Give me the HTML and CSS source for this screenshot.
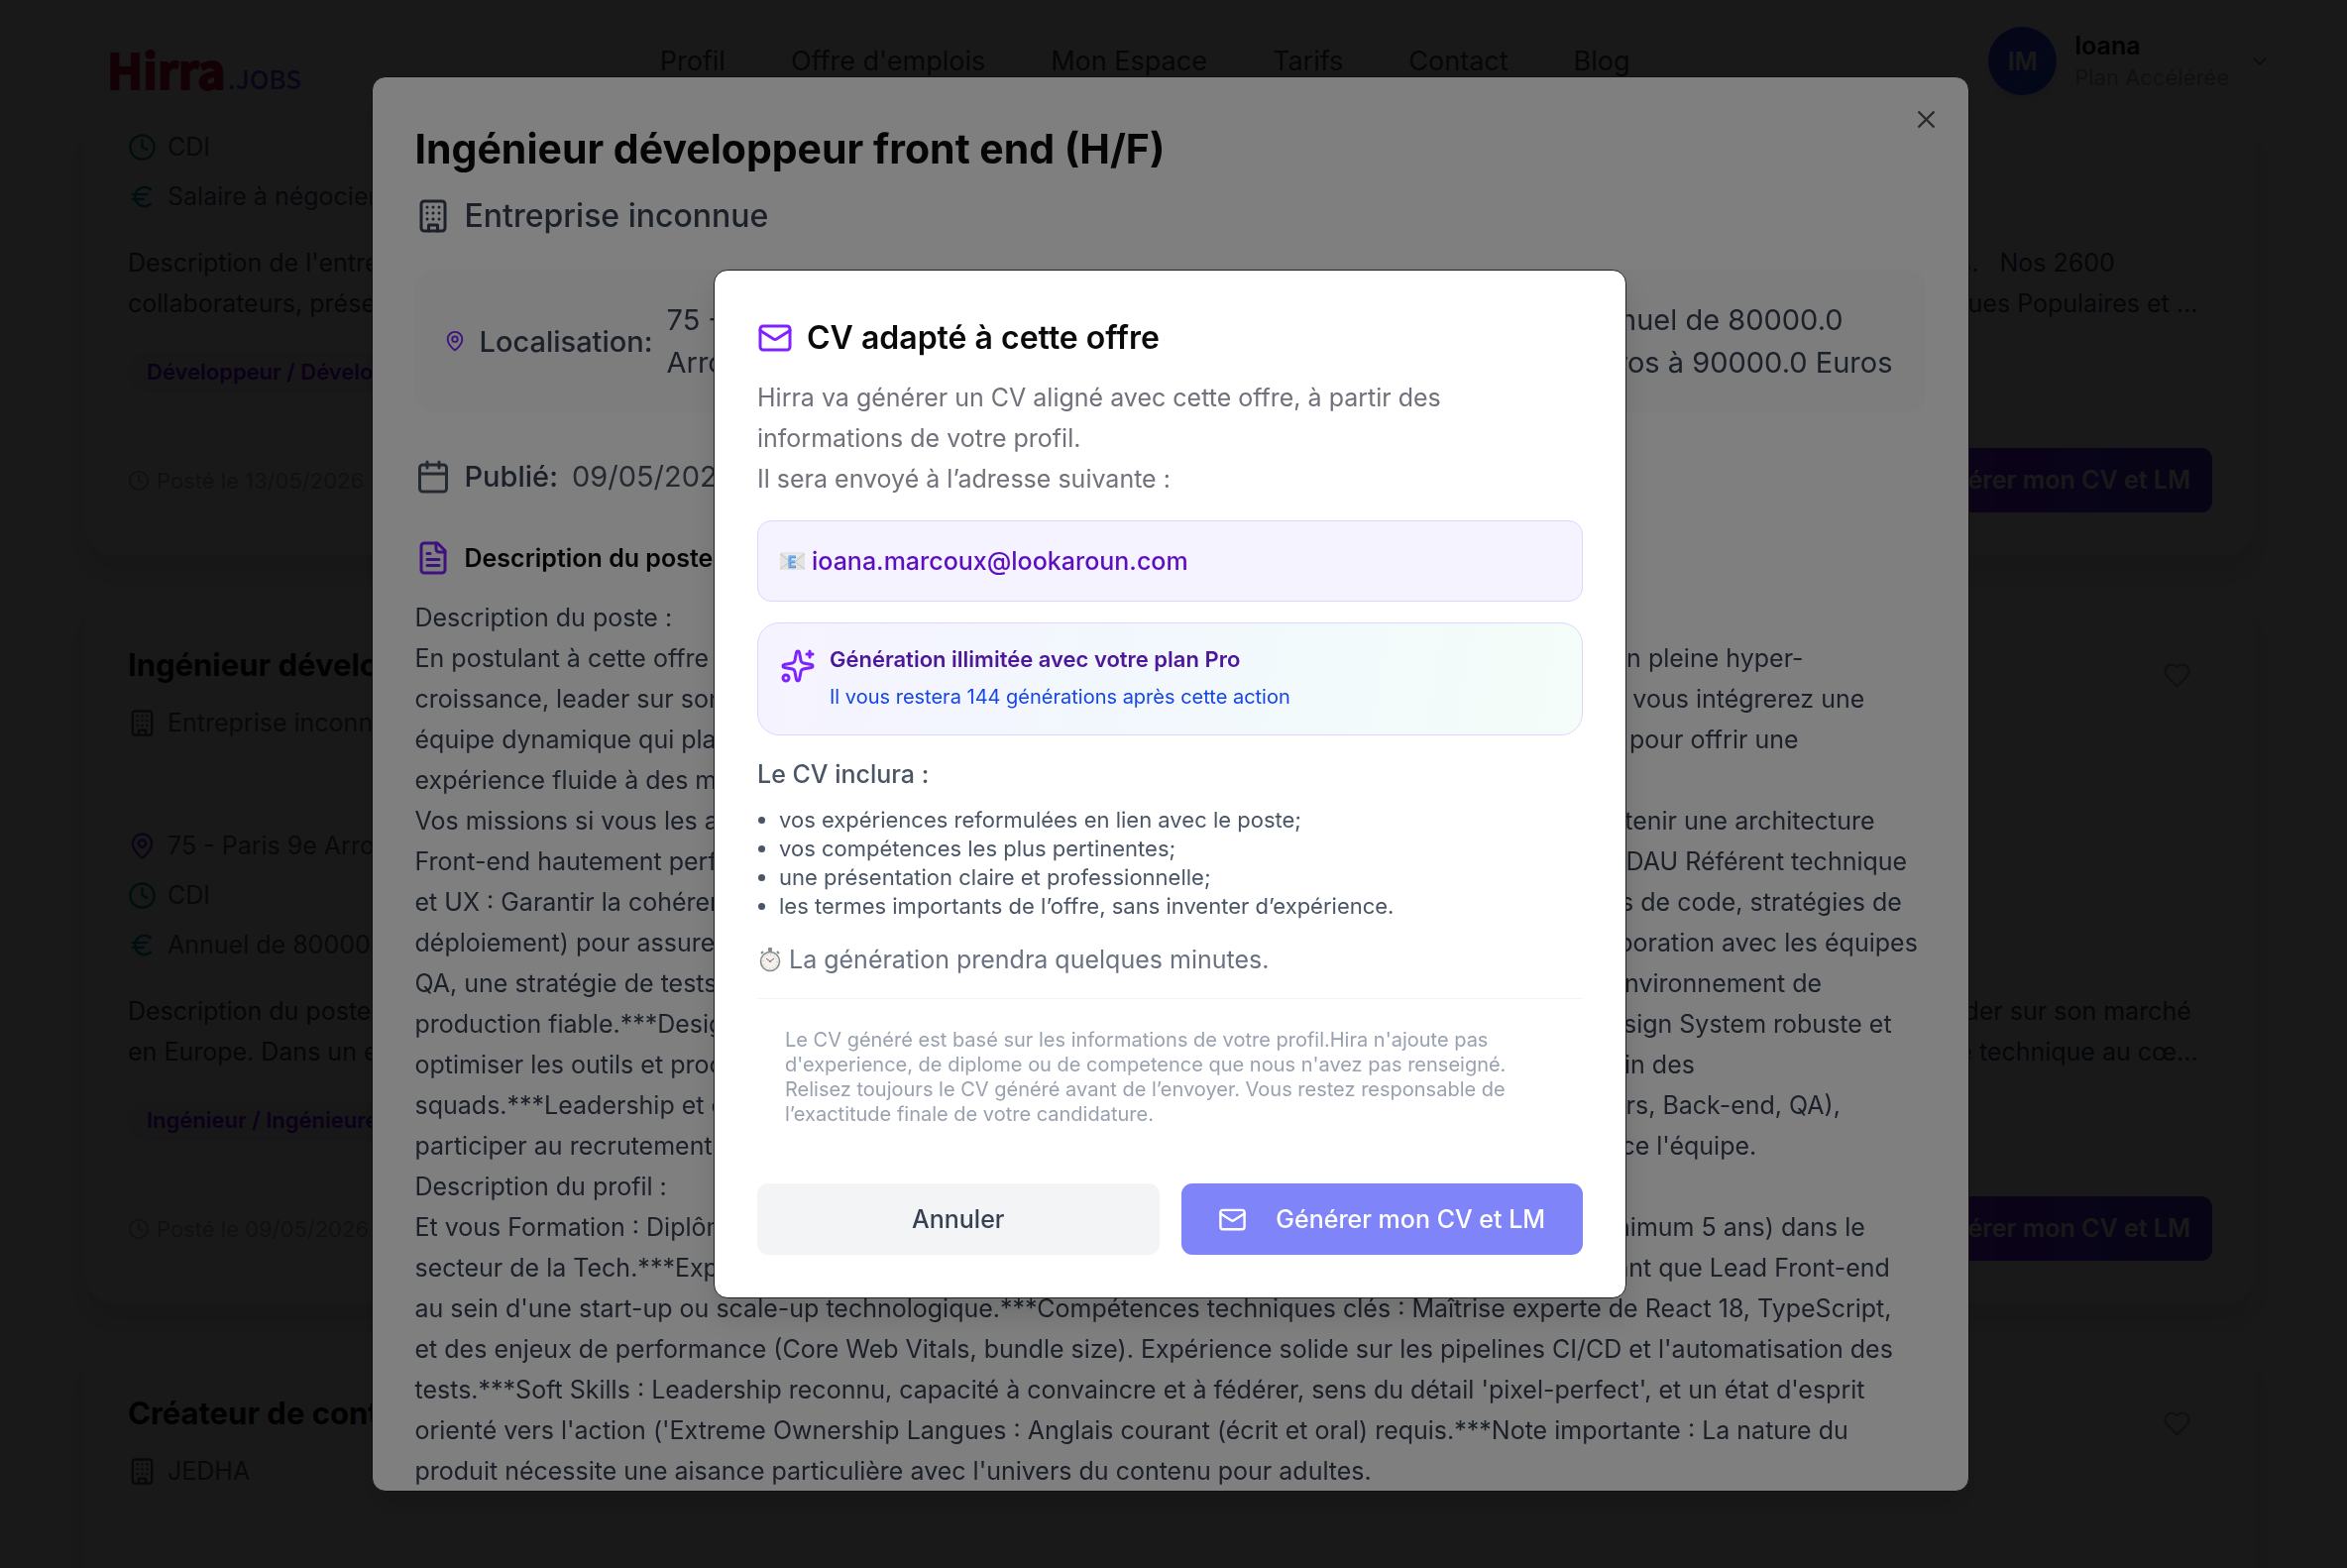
FILE: index.html
```html
<!DOCTYPE html>
<html lang="fr">
<head>
<meta charset="utf-8">
<meta name="viewport" content="width=device-width, initial-scale=1">
<title>Hirra.JOBS – Offres d'emploi</title>
<link rel="stylesheet" href="styles.css">
</head>
<body>

<svg class="sprite" aria-hidden="true">
  <symbol id="i-clock" viewBox="0 0 24 24"><circle cx="12" cy="12" r="10"/><path d="M12 6v6l4 2"/></symbol>
  <symbol id="i-euro" viewBox="0 0 24 24"><path d="M4 10h12"/><path d="M4 14h9"/><path d="M19 6a7.7 7.7 0 0 0-5.2-2A7.9 7.9 0 0 0 6 12c0 4.4 3.5 8 7.8 8 2 0 3.8-.8 5.2-2"/></symbol>
  <symbol id="i-building" viewBox="0 0 24 24"><rect x="4" y="2" width="16" height="20" rx="2"/><path d="M9 22v-4h6v4"/><path d="M8 6h.01M16 6h.01M12 6h.01M12 10h.01M12 14h.01M16 10h.01M16 14h.01M8 10h.01M8 14h.01"/></symbol>
  <symbol id="i-pin" viewBox="0 0 24 24"><path d="M20 10c0 4.993-5.539 10.193-7.399 11.799a1 1 0 0 1-1.202 0C9.539 20.193 4 14.993 4 10a8 8 0 0 1 16 0"/><circle cx="12" cy="10" r="3"/></symbol>
  <symbol id="i-calendar" viewBox="0 0 24 24"><path d="M8 2v4M16 2v4"/><rect x="3" y="4" width="18" height="18" rx="2"/><path d="M3 10h18"/></symbol>
  <symbol id="i-file" viewBox="0 0 24 24"><path d="M15 2H6a2 2 0 0 0-2 2v16a2 2 0 0 0 2 2h12a2 2 0 0 0 2-2V7Z"/><path d="M14 2v4a2 2 0 0 0 2 2h4"/><path d="M10 9H8M16 13H8M16 17H8"/></symbol>
  <symbol id="i-mail" viewBox="0 0 24 24"><rect x="2" y="4" width="20" height="16" rx="2"/><path d="m22 7-8.97 5.7a1.94 1.94 0 0 1-2.06 0L2 7"/></symbol>
  <symbol id="i-heart" viewBox="0 0 24 24"><path d="M19 14c1.49-1.46 3-3.21 3-5.5A5.5 5.5 0 0 0 16.5 3c-1.76 0-3 .5-4.5 2-1.5-1.5-2.74-2-4.5-2A5.5 5.5 0 0 0 2 8.5c0 2.3 1.5 4.05 3 5.5l7 7Z"/></symbol>
  <symbol id="i-x" viewBox="0 0 24 24"><path d="M18 6 6 18M6 6l12 12"/></symbol>
  <symbol id="i-chevron" viewBox="0 0 24 24"><path d="m6 9 6 6 6-6"/></symbol>
  <symbol id="i-sparkles" viewBox="0 0 24 24"><path d="M11.017 2.814a1 1 0 0 1 1.966 0l1.051 5.558a2 2 0 0 0 1.594 1.594l5.558 1.051a1 1 0 0 1 0 1.966l-5.558 1.051a2 2 0 0 0-1.594 1.594l-1.051 5.558a1 1 0 0 1-1.966 0l-1.051-5.558a2 2 0 0 0-1.594-1.594l-5.558-1.051a1 1 0 0 1 0-1.966l5.558-1.051a2 2 0 0 0 1.594-1.594z"/><path d="M20 2v4M22 4h-4"/><circle cx="4" cy="20" r="2"/></symbol>
</svg>

<header class="header">
  <a class="logo" href="#"><span class="logo-name">Hirra</span><span class="logo-suffix">.JOBS</span></a>
  <nav class="nav">
    <a href="#">Profil</a>
    <a href="#">Offre d'emplois</a>
    <a href="#">Mon Espace</a>
    <a href="#">Tarifs</a>
    <a href="#">Contact</a>
    <a href="#">Blog</a>
  </nav>
  <button class="account" type="button">
    <span class="avatar">IM</span>
    <span class="account-text"><span class="account-name">Ioana</span><span class="account-plan">Plan Accélérée</span></span>
    <svg class="icon icon-sm account-chevron"><use href="#i-chevron"/></svg>
  </button>
</header>

<main class="offers">
  <article class="card card-scrolled">
    <ul class="facts">
      <li><svg class="icon icon-md green"><use href="#i-clock"/></svg>CDI</li>
      <li><svg class="icon icon-md cyan"><use href="#i-euro"/></svg>Salaire à négocier</li>
    </ul>
    <p class="summary">Description de l'entreprise : Notre groupe coopératif accompagne depuis plus de vingt ans les banques et leurs clients dans leurs projets très technologiques.&nbsp; &nbsp;Nos 2600<br>collaborateurs, présents sur plusieurs sites en France, conçoivent et développent le système d'information et des services bancaires de l'ensemble des Banques Populaires et ...</p>
    <span class="tag">Développeur / Développeuse front-end</span>
    <footer class="card-foot">
      <span class="posted"><svg class="icon icon-sm"><use href="#i-clock"/></svg>Posté le 13/05/2026</span>
      <button class="btn-offer" type="button">Générer mon CV et LM</button>
    </footer>
  </article>

  <article class="card">
    <header class="card-head">
      <div class="card-title">
        <h2>Ingénieur développeur front end (H/F)</h2>
        <p class="company"><svg class="icon icon-md"><use href="#i-building"/></svg>Entreprise inconnue</p>
      </div>
      <button class="btn-like" type="button" aria-label="Ajouter aux favoris"><svg class="icon icon-md"><use href="#i-heart"/></svg></button>
    </header>
    <ul class="facts">
      <li><svg class="icon icon-md violet"><use href="#i-pin"/></svg>75 - Paris 9e Arrondissement</li>
      <li><svg class="icon icon-md green"><use href="#i-clock"/></svg>CDI</li>
      <li><svg class="icon icon-md cyan"><use href="#i-euro"/></svg>Annuel de 80000.0 Euros à 90000.0 Euros</li>
    </ul>
    <p class="summary">Description du poste : En postulant à cette offre, vous rejoignez notre équipe passionnée et un acteur technologique français en pleine hyper-croissance, leader sur son marché<br>en Europe. Dans un environnement stimulant et très collaboratif, vous intégrerez une équipe très dynamique qui place la performance et la très grande qualité technique au cœ...</p>
    <span class="tag">Ingénieur / Ingénieure développement</span>
    <footer class="card-foot">
      <span class="posted"><svg class="icon icon-sm"><use href="#i-clock"/></svg>Posté le 09/05/2026</span>
      <button class="btn-offer" type="button">Générer mon CV et LM</button>
    </footer>
  </article>

  <article class="card">
    <header class="card-head">
      <div class="card-title">
        <h2>Créateur de contenu (H/F)</h2>
        <p class="company"><svg class="icon icon-md"><use href="#i-building"/></svg>JEDHA</p>
      </div>
      <button class="btn-like" type="button" aria-label="Ajouter aux favoris"><svg class="icon icon-md"><use href="#i-heart"/></svg></button>
    </header>
  </article>
</main>

<div class="overlay overlay-offer">
  <section class="dialog dialog-offer" role="dialog" aria-labelledby="offer-title">
    <button class="btn-close" type="button" aria-label="Fermer"><svg class="icon icon-md"><use href="#i-x"/></svg></button>
    <h1 id="offer-title">Ingénieur développeur front end (H/F)</h1>
    <p class="offer-company"><svg class="icon icon-lg"><use href="#i-building"/></svg>Entreprise inconnue</p>
    <dl class="offer-facts">
      <div><svg class="icon icon-sm violet"><use href="#i-pin"/></svg><dt>Localisation:</dt><dd>75 - Paris 9e Arrondissement</dd></div>
      <div><svg class="icon icon-sm green"><use href="#i-clock"/></svg><dt>Contrat:</dt><dd>CDI</dd></div>
      <div><svg class="icon icon-sm cyan"><use href="#i-euro"/></svg><dt>Salaire:</dt><dd>Annuel de 80000.0 Euros à 90000.0 Euros</dd></div>
    </dl>
    <p class="offer-date"><svg class="icon icon-lg"><use href="#i-calendar"/></svg><strong>Publié:</strong><time datetime="2026-05-09">09/05/2026</time></p>
    <h2 class="offer-heading"><svg class="icon icon-lg violet"><use href="#i-file"/></svg>Description du poste</h2>
    <p class="offer-text">Description du poste :<br>
En postulant à cette offre vous rejoignez notre équipe passionnée et un acteur technologique français en pleine hyper-<br>
croissance, leader sur son marché en Europe. Dans un environnement très stimulant et très collaboratif, vous intégrerez une<br>
équipe dynamique qui place la performance technique et l'expérience client au cœur de notre stratégie pour offrir une<br>
expérience fluide à des millions d'utilisateurs.<br>
Vos missions si vous les acceptez : ***Architecture : Concevoir, faire évoluer, documenter et aussi maintenir une architecture<br>
Front-end hautement performante et aussi sécurisée, capable de supporter des dizaines de millions de DAU Référent technique<br>
et UX : Garantir la cohérence technique, graphique et visuelle de l'ensemble de nos applications (revues de code, stratégies de<br>
déploiement) pour assurer la qualité et aussi la maintenabilité du code livré. ***Qualité : Définir en collaboration avec les équipes<br>
QA, une stratégie de tests automatisés unitaires, d'intégration puis de bout en bout afin de garantir un environnement de<br>
production fiable.***Design System : Construire, documenter et faire évoluer avec des designers un Design System robuste et<br>
optimiser les outils et processus de développements pour fluidifier une collaboration au quotidien au sein des<br>
squads.***Leadership et coordination : Collaborer au quotidien avec toutes les autres équipes (Designers, Back-end, QA),<br>
participer au recrutement et accompagner la montée en compétences technique et humaine, qui renforce l'équipe.<br>
Description du profil :<br>
Et vous Formation : Diplôme d'ingénieur ou équivalent, avec longue expérience solide et confirmée (minimum 5 ans) dans le<br>
secteur de la Tech.***Expérience : Vous avez déjà souvent occupé avec succès un poste similaire en tant que Lead Front-end<br>
au sein d'une start-up ou scale-up technologique.***Compétences techniques clés : Maîtrise experte de React 18, TypeScript,<br>
et des enjeux de performance (Core Web Vitals, bundle size). Expérience solide sur les pipelines CI/CD et l'automatisation des<br>
tests.***Soft Skills : Leadership reconnu, capacité à convaincre et à fédérer, sens du détail 'pixel-perfect', et un état d'esprit<br>
orienté vers l'action ('Extreme Ownership Langues : Anglais courant (écrit et oral) requis.***Note importante : La nature du<br>
produit nécessite une aisance particulière avec l'univers du contenu pour adultes.</p>
  </section>
</div>

<div class="overlay overlay-cv">
  <section class="dialog dialog-cv" role="dialog" aria-modal="true" aria-labelledby="cv-title">
    <h2 class="cv-title" id="cv-title"><svg class="icon icon-lg violet"><use href="#i-mail"/></svg>CV adapté à cette offre</h2>
    <p class="cv-intro">Hirra va générer un CV aligné avec cette offre, à partir des informations de votre profil.<br>Il sera envoyé à l’adresse suivante :</p>
    <p class="cv-email">
      <svg class="emoji" viewBox="0 0 25 25" aria-hidden="true"><rect x="0" y="4" width="25" height="17" rx="1" fill="#e3e3e3"/><path d="M0 5l10 8L0 20M25 5l-10 8 10 7" fill="none" stroke="#c3c3c3"/><path d="M1 4l11.500 9L24 4z" fill="#ececec" stroke="#cfcfcf" stroke-width=".6"/><path d="M16 8h-6v10h6M10 13h5" fill="none" stroke="#4f83bd" stroke-width="2.600"/><path d="M15.500 7.500h-6v10h6M10 12.500h5" fill="none" stroke="#6fb1f5" stroke-width="1.800"/></svg>
      <span>ioana.marcoux@lookaroun.com</span>
    </p>
    <div class="cv-plan">
      <svg class="icon icon-lg violet"><use href="#i-sparkles"/></svg>
      <div><p class="cv-plan-title">Génération illimitée avec votre plan Pro</p><p class="cv-plan-left">Il vous restera 144 générations après cette action</p></div>
    </div>
    <p class="cv-includes">Le CV inclura :</p>
    <ul class="cv-list">
      <li>vos expériences reformulées en lien avec le poste;</li>
      <li>vos compétences les plus pertinentes;</li>
      <li>une présentation claire et professionnelle;</li>
      <li>les termes importants de l’offre, sans inventer d’expérience.</li>
    </ul>
    <p class="cv-delay">
      <svg class="emoji" viewBox="0 0 25 25" aria-hidden="true"><rect x="11" y="0" width="4" height="4" rx="1" fill="#8a8a8a"/><path d="M20 4l2 2M6 4L4 6" stroke="#888" stroke-width="2"/><circle cx="13" cy="14" r="9.500" fill="#f4f2ee" stroke="#8b8b8b" stroke-width="1.600"/><circle cx="13" cy="14" r="7" fill="none" stroke="#b5b5b5" stroke-dasharray="1 2.660"/><path d="M13 14l4-3M13 14l-4-3" stroke="#666" stroke-width="1"/><circle cx="13" cy="14" r="1" fill="#d9664a"/></svg>
      <span>La génération prendra quelques minutes.</span>
    </p>
    <p class="cv-note">Le CV généré est basé sur les informations de votre profil.Hira n'ajoute pas d'experience, de diplome ou de competence que nous n'avez pas renseigné. Relisez toujours le CV généré avant de l’envoyer. Vous restez responsable de l’exactitude finale de votre candidature.</p>
    <div class="cv-actions">
      <button class="btn btn-cancel" type="button">Annuler</button>
      <button class="btn btn-generate" type="button"><svg class="icon icon-md"><use href="#i-mail"/></svg>Générer mon CV et LM</button>
    </div>
  </section>
</div>
</body>
</html>
```
FILE: styles.css
```css
* { box-sizing: border-box; margin: 0; padding: 0; }

html, body { height: 100%; overflow: hidden; }

body {
  padding-right: 7px;
  background: #f9fafb;
  color: #0a0a0a;
  font-family: Inter, "Liberation Sans", sans-serif;
  font-size: 25px;
  line-height: 36px;
}

a { color: inherit; text-decoration: none; }
ul { list-style: none; }
button { border: 0; background: none; color: inherit; font: inherit; cursor: pointer; }

.sprite { position: absolute; width: 0; height: 0; }

.icon { flex: none; fill: none; stroke: currentColor; stroke-width: 2; stroke-linecap: round; stroke-linejoin: round; }
.icon-sm { width: 22px; height: 22px; }
.icon-md { width: 29px; height: 29px; }
.icon-lg { width: 36px; height: 36px; }
.violet { color: #7f22fe; }
.green { color: #009966; }
.cyan { color: #0092b8; }
.emoji { flex: none; width: 25px; height: 25px; }

/* Header */
.header {
  display: flex;
  align-items: center;
  justify-content: space-between;
  padding: 27px 70px 30px 108px;
  border-bottom: 1px solid #e5e7eb;
  background: #fff;
}
.logo { display: flex; align-items: baseline; gap: 2px; padding-top: 15px; font-family: "Noto Sans CJK JP", "Liberation Sans", sans-serif; font-weight: 700; line-height: 1; }
.logo-name { color: #c81040; font-size: 48px; -webkit-text-stroke: 2px #c81040; }
.logo-suffix { color: #4f46e5; font-size: 26px; font-weight: 500; }
.nav { display: flex; gap: 66px; color: #364153; font-size: 27px; }
.account { display: flex; align-items: center; text-align: left; }
.avatar { display: grid; place-items: center; width: 69px; height: 69px; margin-right: 18px; border-radius: 50%; background: linear-gradient(135deg, #4f39f6, #155dfc); box-shadow: 0 7px 11px rgba(0, 0, 0, .1); color: #fff; font-weight: 600; }
.account-text { display: grid; line-height: 32px; }
.account-name { font-weight: 600; }
.account-plan { color: #99a1af; font-size: 22px; }
.account-chevron { margin-left: 20px; color: #6a7282; }

/* Offer cards */
.offers { display: grid; gap: 42px; padding: 0 86px; }
.card { display: flex; flex-direction: column; align-items: flex-start; padding: 43px; border-radius: 29px; background: #fff; box-shadow: 0 18px 27px rgba(0, 0, 0, .1); }
.card-scrolled { padding-top: 3px; border-radius: 0 0 29px 29px; }
.card-head { display: flex; justify-content: space-between; align-items: flex-start; align-self: stretch; margin-bottom: 88px; }
.card-title h2 { font-size: 31px; line-height: 52px; margin-bottom: 14px; }
.company, .facts li { display: flex; align-items: center; gap: 11px; color: #4a5565; }
.btn-like { display: grid; place-items: center; width: 72px; height: 72px; color: #99a1af; }
.facts { display: grid; gap: 14px; margin-bottom: 29px; }
.summary { margin-bottom: 30px; color: #364153; line-height: 41px; white-space: nowrap; }
.tag { padding: 3px 18px; border: 1px solid #ddd6ff; border-radius: 20px; background: #f5f3ff; color: #7008e7; font-size: 22px; font-weight: 600; line-height: 29px; }
.card-foot { display: flex; justify-content: space-between; align-items: center; align-self: stretch; margin-top: 58px; }
.posted { display: flex; align-items: center; gap: 7px; color: #99a1af; font-size: 22px; }
.btn-offer { padding: 14px 22px 15px; border-radius: 11px; background: linear-gradient(90deg, #7f22fe, #432dd7); color: #fff; font-weight: 600; }

/* Dialogs */
.overlay { position: fixed; inset: 0; display: grid; place-items: center; padding-right: 7px; }
.overlay-offer { background: rgba(0, 0, 0, .8); }
.overlay-cv { background: rgba(0, 0, 0, .5); }
.dialog { border: 1px solid #222; border-radius: 14px; background: #fff; box-shadow: 0 18px 27px rgba(0, 0, 0, .12); }

.dialog-offer { position: relative; width: 90%; max-width: 1612px; max-height: calc(100vh - 154px); overflow: hidden; padding: 43px; }
.dialog-offer h1 { margin-bottom: 14px; font-size: 41px; line-height: 58px; }
.btn-close { position: absolute; top: 28px; right: 28px; display: grid; opacity: .7; }
.offer-company { display: flex; align-items: center; gap: 14px; margin-bottom: 29px; color: #364153; font-size: 32px; font-weight: 500; line-height: 50px; }
.offer-facts { display: grid; grid-template-columns: repeat(3, 1fr); gap: 29px; margin-bottom: 43px; padding: 29px; border-radius: 18px; background: #fafafa; color: #364153; font-size: 29px; line-height: 43px; }
.offer-facts div { display: flex; align-items: center; gap: 14px; }
.offer-facts dt { font-weight: 500; }
.offer-date { display: flex; align-items: center; gap: 14px; margin-bottom: 43px; color: #4a5565; font-size: 29px; line-height: 43px; }
.offer-date strong { color: #364153; font-weight: 500; }
.offer-heading { display: flex; align-items: center; gap: 14px; margin-bottom: 22px; font-size: 25px; font-weight: 600; }
.offer-text { color: #364153; line-height: 41px; white-space: nowrap; }

.dialog-cv { width: 100%; max-width: 921px; padding: 43px; }
.cv-title { display: flex; align-items: center; gap: 14px; margin-bottom: 15px; font-size: 32px; font-weight: 600; line-height: 50px; }
.cv-intro { margin-bottom: 21px; color: #71717b; line-height: 41px; }
.cv-email { display: flex; align-items: center; gap: 7px; margin-bottom: 21px; padding: 22px; border: 1px solid #ddd6ff; border-radius: 14px; background: #f5f3ff; color: #5d0ec0; font-weight: 500; }
.cv-plan { display: flex; gap: 14px; margin-bottom: 21px; padding: 22px; border: 1px solid #ddd6ff; border-radius: 22px; background: linear-gradient(100deg, #f5f3ff, #f2f8fd 50%, #f4fdf9); }
.cv-plan .icon { margin-top: 3px; }
.cv-plan-title { margin-bottom: 7px; color: #4d179a; font-size: 22px; font-weight: 600; line-height: 29px; }
.cv-plan-left { color: #1447e6; font-size: 20px; line-height: 32px; }
.cv-includes { margin-bottom: 14px; color: #4a5565; font-weight: 500; }
.cv-list { display: grid; margin-bottom: 21px; padding-left: 22px; color: #4a5565; font-size: 22px; line-height: 29px; list-style: disc; }
.cv-delay { display: flex; align-items: center; gap: 7px; margin-bottom: 21px; color: #6a7282; }
.cv-note { margin-bottom: 28px; padding: 29px 28px; border-top: 1px solid #f3f4f6; color: #99a1af; font-size: 20px; line-height: 25px; }
.cv-actions { display: grid; grid-template-columns: 1fr 1fr; gap: 22px; }
.btn { display: flex; align-items: center; justify-content: center; gap: 29px; height: 72px; border-radius: 11px; font-weight: 500; }
.btn-cancel { background: #f3f4f6; color: #364153; }
.btn-generate { background: #7f84f8; color: #fff; }
```
